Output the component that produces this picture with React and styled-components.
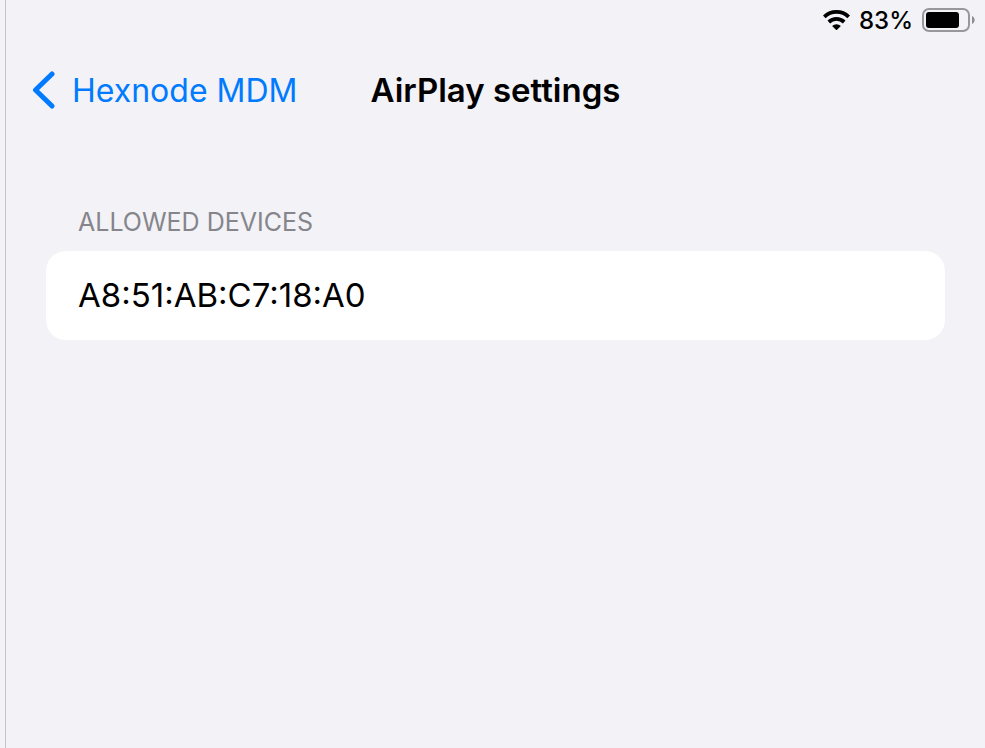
import React from "react";
import styled, { createGlobalStyle } from "styled-components";

const GlobalStyle = createGlobalStyle`
  *, *::before, *::after {
    box-sizing: border-box;
  }

  body {
    margin: 0;
    background: #f2f2f7;
    color: #000;
    font-family: Inter, "Liberation Sans", sans-serif;
  }
`;

const Layout = styled.div`
  display: flex;
  min-height: 100vh;
`;

const SidebarEdge = styled.div`
  width: 6px;
  flex: none;
  border-right: 1px solid #c5c5c9;
`;

const Pane = styled.div`
  flex: 1;
  min-width: 0;
`;

const StatusBar = styled.div`
  display: flex;
  align-items: center;
  justify-content: flex-end;
  gap: 9px;
  height: 40px;
  padding-right: 10px;
  font-size: 24px;
  font-weight: 500;
`;

const NavBar = styled.header`
  display: grid;
  grid-template-columns: 1fr auto 1fr;
  align-items: center;
  height: 100px;
  padding: 0 26px;
`;

const BackLink = styled.a`
  display: flex;
  align-items: center;
  gap: 16px;
  color: #007aff;
  font-size: 32px;
  text-decoration: none;
  white-space: nowrap;
`;

const Title = styled.h1`
  margin: 0;
  font-size: 33px;
  font-weight: 600;
`;

const Section = styled.section`
  padding: 64px 40px 0;
`;

const SectionTitle = styled.h2`
  margin: 0;
  padding: 0 32px;
  color: #85858b;
  font-size: 25px;
  font-weight: 400;
  line-height: 36px;
  text-transform: uppercase;
`;

const DeviceList = styled.ul`
  margin: 11px 0 0;
  padding: 0;
  border-radius: 20px;
  background: #fff;
  list-style: none;
`;

const Device = styled.li`
  padding: 0 32px;
  font-size: 33px;
  line-height: 89px;
`;

const WifiIcon = () => (
  <svg width="27" height="20" viewBox="0 0 27 20" aria-hidden="true">
    <path d="M1.300 6.900a17.500 17.500 0 0 1 24.400 0M5.800 12a11.300 11.300 0 0 1 15.400 0" fill="none" stroke="#000" strokeWidth="3.800" />
    <path d="M13.500 20.300l-4.400-4.400a6.400 6.400 0 0 1 8.800 0z" />
  </svg>
);

const BatteryIcon = () => (
  <svg width="53" height="24" viewBox="0 0 53 24" aria-hidden="true">
    <rect x="1" y="1" width="46" height="22" rx="6" fill="none" stroke="#98989b" strokeWidth="2" />
    <rect x="4" y="4" width="33" height="16" rx="3" />
    <path d="M50 8C53.500 9.500 53.500 14.500 50 16z" fill="#8e8e92" />
  </svg>
);

const BackIcon = () => (
  <svg width="24" height="38" viewBox="0 0 24 38" aria-hidden="true">
    <path d="M20 3L3.500 19L20 35" fill="none" stroke="#007aff" strokeWidth="5" strokeLinecap="round" strokeLinejoin="round" />
  </svg>
);

const App = () => (
  <>
    <GlobalStyle />
    <Layout>
      <SidebarEdge />
      <Pane>
        <StatusBar>
          <WifiIcon />
          <span>83%</span>
          <BatteryIcon />
        </StatusBar>
        <NavBar>
          <BackLink href="#">
            <BackIcon />
            Hexnode MDM
          </BackLink>
          <Title>AirPlay settings</Title>
        </NavBar>
        <Section>
          <SectionTitle>Allowed devices</SectionTitle>
          <DeviceList>
            <Device>A8:51:AB:C7:18:A0</Device>
          </DeviceList>
        </Section>
      </Pane>
    </Layout>
  </>
);

export default App;
